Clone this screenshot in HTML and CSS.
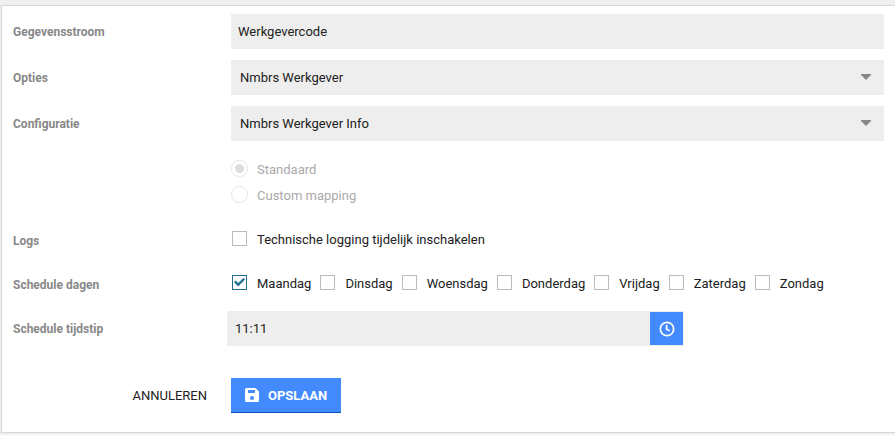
FILE: index.html
```html
<!DOCTYPE html>
<html lang="nl">
    <head>
        <meta charset="utf-8">
        <title>Gegevensstroom</title>
        <link rel="stylesheet" href="styles.css">
    </head>
    <body>
        <form class="panel">
            <div class="row">
                <label class="label" for="stroom">Gegevensstroom</label>
                <input type="text" class="in" id="stroom" value="Werkgevercode">
            </div>
            <div class="row">
                <label class="label" for="opties">Opties</label>
                <div class="select">
                    <select class="in" id="opties">
                        <option>Nmbrs Werkgever</option>
                    </select>
                    <svg class="arrow" viewBox="0 0 10 6"><path d="M0 0h10v1L5 6 0 1z"/></svg>
                </div>
            </div>
            <div class="row">
                <label class="label" for="config">Configuratie</label>
                <div class="select">
                    <select class="in" id="config">
                        <option>Nmbrs Werkgever Info</option>
                    </select>
                    <svg class="arrow" viewBox="0 0 10 6"><path d="M0 0h10v1L5 6 0 1z"/></svg>
                </div>
            </div>
            <div class="row">
                <div class="radios">
                    <label class="radio"><input type="radio" name="mapping" checked disabled><span>Standaard</span></label>
                    <label class="radio"><input type="radio" name="mapping" disabled><span>Custom mapping</span></label>
                </div>
            </div>
            <div class="row row-check">
                <span class="label">Logs</span>
                <div class="checks">
                    <label class="check"><input type="checkbox"><span>Technische logging tijdelijk inschakelen</span></label>
                </div>
            </div>
            <div class="row row-check">
                <span class="label">Schedule dagen</span>
                <div class="checks">
                    <label class="check"><input type="checkbox" checked><span>Maandag</span></label>
                    <label class="check"><input type="checkbox"><span>Dinsdag</span></label>
                    <label class="check"><input type="checkbox"><span>Woensdag</span></label>
                    <label class="check"><input type="checkbox"><span>Donderdag</span></label>
                    <label class="check"><input type="checkbox"><span>Vrijdag</span></label>
                    <label class="check"><input type="checkbox"><span>Zaterdag</span></label>
                    <label class="check"><input type="checkbox"><span>Zondag</span></label>
                </div>
            </div>
            <div class="row row-time">
                <label class="label" for="tijdstip">Schedule tijdstip</label>
                <div class="time">
                    <input type="text" class="in" id="tijdstip" value="11:11">
                    <button type="button" class="clock" aria-label="Tijd kiezen">
                        <svg viewBox="0 0 16 16" width="16" height="16"><circle cx="8" cy="8" r="6.7"/><path d="M7.600 4v4.200l3 1.600"/></svg>
                    </button>
                </div>
            </div>
            <div class="buttons">
                <button type="button" class="cancel">ANNULEREN</button>
                <button type="button" class="save">
                    <svg viewBox="0 0 14 14" width="14" height="14"><path fill-rule="evenodd" d="M1.5 0H10.500L14 3.500V12.500Q14 14 12.500 14H1.500Q0 14 0 12.500V1.500Q0 0 1.500 0zM3 2V5H10V2zM7 8A2 2 0 1 0 7 12A2 2 0 1 0 7 8z"/></svg>
                    OPSLAAN
                </button>
            </div>
        </form>
    </body>
</html>
```
FILE: styles.css
```css
* {
    box-sizing: border-box;
}
body {
    margin: 0;
    padding: 5px 0 0 1px;
    background: #f0f0f0;
    font-family: Roboto, sans-serif;
    font-size: 13px;
    color: #212121;
}
input, select, button {
    font: inherit;
    color: inherit;
    margin: 0;
    border: 0;
}
.panel {
    background: white;
    border: 1px solid #d5d7df;
    border-right: 0;
    padding: 8px 11px 19px;
}
.row {
    display: grid;
    grid-template-columns: 218px 1fr;
    align-items: center;
    min-height: 35px;
    margin-bottom: 11px;
}
.row-check {
    min-height: 33px;
}
.row-time {
    margin-top: 12px;
}
.label {
    font-size: 12px;
    font-weight: bold;
    color: #888;
}
.row-check .label {
    padding-top: 4px;
}
.in {
    width: 100%;
    height: 35px;
    padding: 0 7px;
    border-radius: 0;
    background: #eee;
}
.select {
    position: relative;
}
.select .in {
    appearance: none;
    padding-left: 9px;
}
.arrow {
    position: absolute;
    right: 13px;
    top: 14px;
    width: 10px;
    height: 6px;
    fill: #888;
    pointer-events: none;
}
.radios {
    grid-column: 2;
    padding: 3px 0 4px;
}
.radio {
    display: flex;
    align-items: center;
    gap: 9px;
    height: 26px;
    color: #aaa;
}
.radio span, .check span {
    padding-top: 2px;
}
.radio input {
    appearance: none;
    width: 17px;
    height: 17px;
    border: 1px solid #dfe9ee;
    border-radius: 50%;
}
.radio input:checked {
    background: radial-gradient(circle, #ddd 4px, white 5px);
}
.checks {
    display: flex;
    flex-wrap: wrap;
    gap: 9px;
    padding-left: 1px;
}
.check {
    display: flex;
    align-items: center;
    gap: 10px;
}
.check input {
    appearance: none;
    width: 15px;
    height: 15px;
    border: 1px solid #bbb;
}
.check input:checked {
    display: grid;
    place-items: center;
    border-color: #1f6f94;
}
.check input:checked::before {
    content: "";
    width: 11px;
    height: 9px;
    background: #1f6f94;
    clip-path: polygon(0 45%, 15% 28%, 38% 55%, 86% 0, 100% 16%, 38% 95%);
}
.time {
    display: flex;
    width: 70%;
    margin-left: -4px;
    background: #eee;
}
.time .in {
    flex: 1;
    padding-left: 8px;
}
.clock {
    display: flex;
    align-items: center;
    justify-content: center;
    width: 33px;
    margin: 1px;
    padding: 0;
    background: #448aff;
}
.clock svg {
    fill: none;
    stroke: white;
    stroke-width: 1.7;
}
.buttons {
    display: flex;
    margin-top: 32px;
}
.cancel {
    width: 218px;
    padding: 0 24px 0 0;
    background: none;
    text-align: right;
}
.save {
    display: flex;
    align-items: center;
    gap: 9px;
    height: 35px;
    padding: 0 14px;
    background: #448aff;
    border-bottom: 1px solid #0b4fc4;
    color: white;
    font-weight: bold;
}
.save svg {
    fill: white;
}
```
